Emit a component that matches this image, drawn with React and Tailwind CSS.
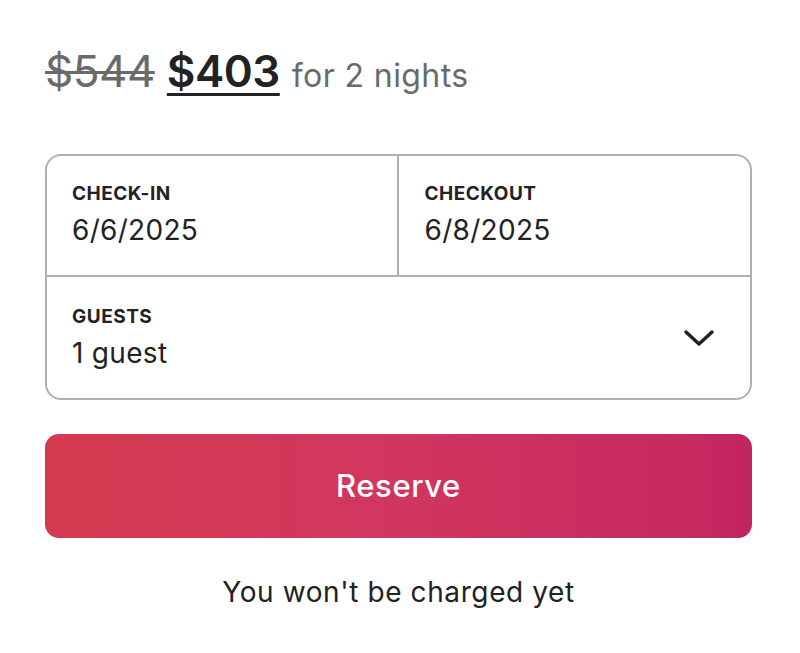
export default function App() {
    return (
        <div className="w-[800px] h-[653px] bg-white pl-[45px] pt-[43px] text-[#222222]" style={{ fontFamily: 'Inter, "Noto Sans", sans-serif' }}>
            <div className="flex items-baseline gap-[12px] leading-[56px]">
                <span className="text-[44px] text-[#6a6a6a] line-through decoration-[3px] tracking-[-0.5px]">$544</span>
                <span className="text-[44px] font-semibold underline decoration-[3px] underline-offset-[6px] tracking-[-0.5px]">$403</span>
                <span className="text-[32px] text-[#6a6a6a] tracking-[0.4px]">for 2 nights</span>
            </div>

            <div className="mt-[50px] w-[707px] border-2 border-[#b0b0b0] rounded-[16px] overflow-hidden">
                <div className="grid grid-cols-2 h-[121px] border-b-2 border-[#b0b0b0]">
                    <div className="pl-[25px] pt-[26px] border-r-2 border-[#b0b0b0]">
                        <div className="text-[19px] font-bold leading-[24px] tracking-[0.5px]">CHECK-IN</div>
                        <div className="text-[28px] leading-[36px] mt-[6px] tracking-[0.3px]">6/6/2025</div>
                    </div>
                    <div className="pl-[26px] pt-[26px]">
                        <div className="text-[19px] font-bold leading-[24px] tracking-[0.5px]">CHECKOUT</div>
                        <div className="text-[28px] leading-[36px] mt-[6px] tracking-[0.3px]">6/8/2025</div>
                    </div>
                </div>
                <div className="flex items-center justify-between h-[121px] pl-[25px] pr-[35px]">
                    <div>
                        <div className="text-[19px] font-bold leading-[24px] tracking-[0.5px]">GUESTS</div>
                        <div className="text-[28px] leading-[36px] mt-[6px] tracking-[0.3px]">1 guest</div>
                    </div>
                    <svg width="32" height="32" viewBox="0 0 32 32" fill="none" stroke="#222222" strokeWidth="3.5" strokeLinecap="round" strokeLinejoin="round">
                        <path d="M3 10 L16 22 L29 10" />
                    </svg>
                </div>
            </div>

            <button className="mt-[34px] w-[707px] h-[104px] rounded-[14px] bg-gradient-to-r from-[#d4394e] via-[#d13660] to-[#c3265f] text-white text-[31px] font-medium tracking-[0.6px]">
                Reserve
            </button>

            <div className="mt-[34px] w-[707px] text-center text-[28px] leading-[40px] tracking-[0.6px]">You won't be charged yet</div>
        </div>
    );
}
